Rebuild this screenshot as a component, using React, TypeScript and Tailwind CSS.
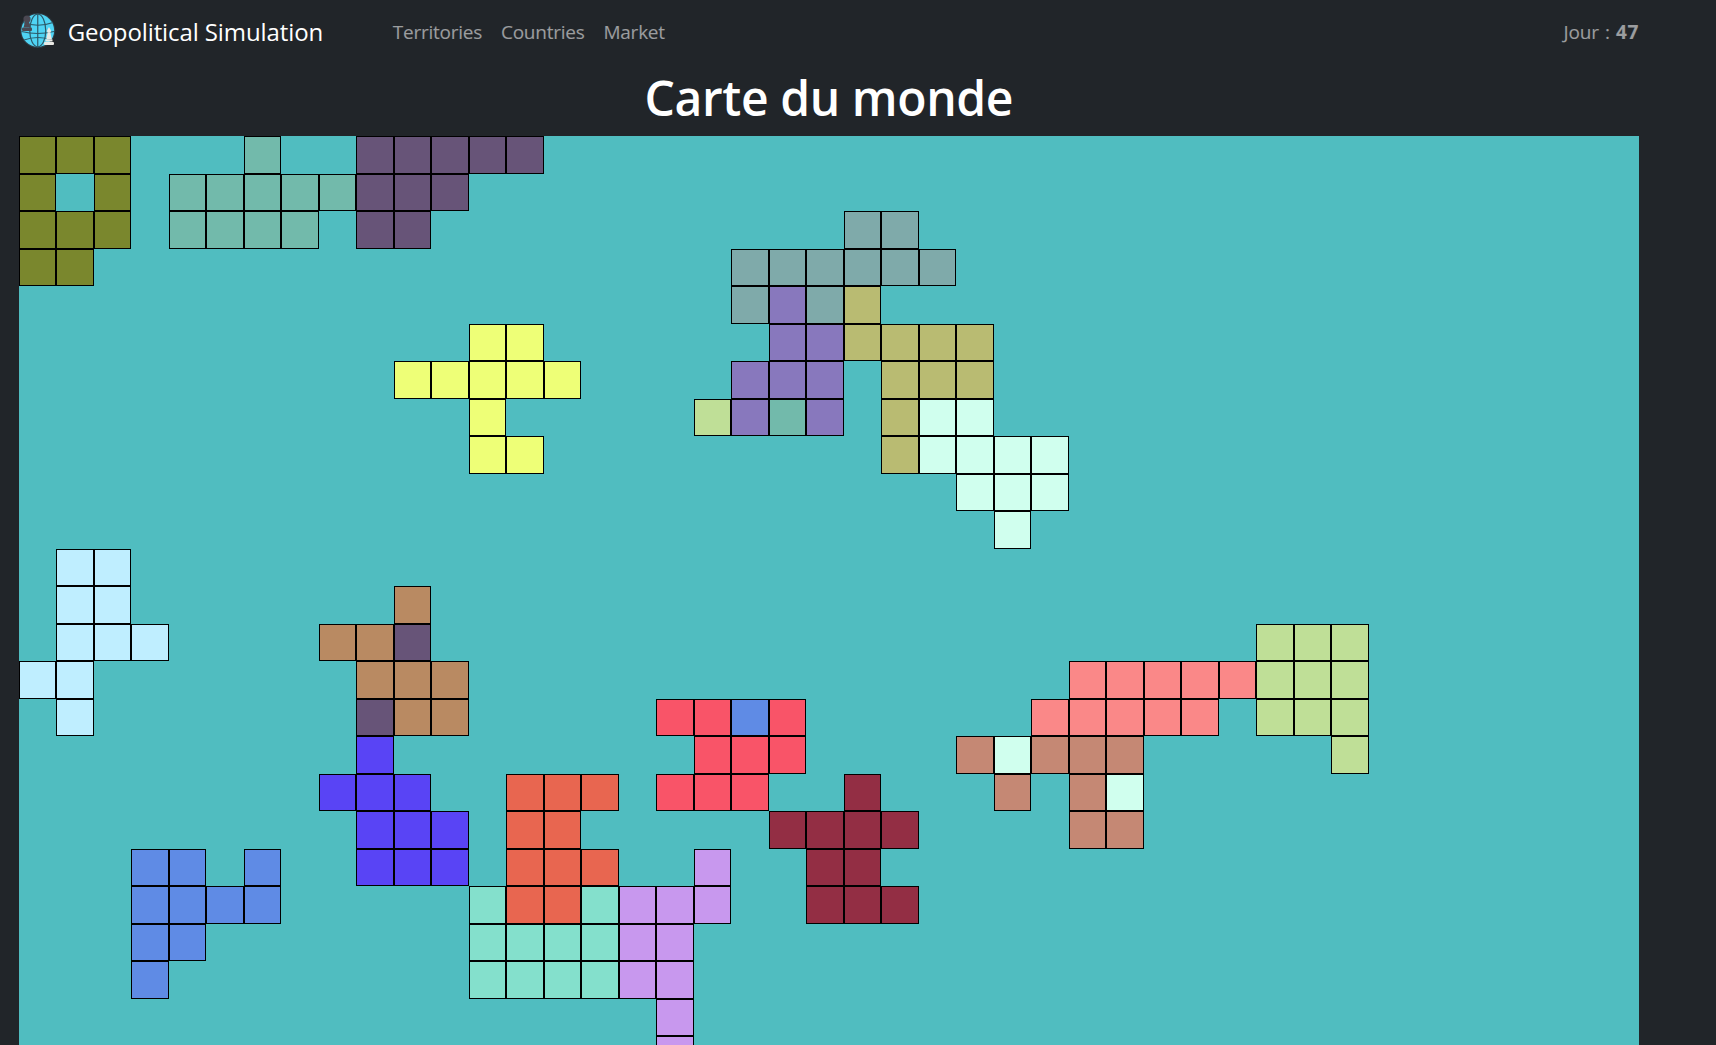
import React from "react";

const ROWS = [
  "AAA...B..CCCCC",
  "A.A.BBBBBCCC",
  "AAA.BBBB.CC...........DD",
  "AA.................DDDDDD",
  "...................DEDF",
  "............HH......EEFFFF",
  "..........HHHHH....EEE.FFF",
  "............H.....SEBE.FGG",
  "............HH.........FGGGG",
  ".........................GGG",
  "..........................G",
  ".II",
  ".II.......J",
  ".III....JJC......................SSS",
  "II.......JJJ................RRRRRSSS",
  ".I.......CJJ.....MMLM......RRRRR.SSS",
  ".........K........MMM....TGTTT.....S",
  "........KKK..OOO.MMM..N...T.TG",
  ".........KKK.OO.....NNNN....TT",
  "...LL.L..KKK.OOO..Q..NN",
  "...LLLL.....POOPQQQ..NNN",
  "...LL.......PPPPQQ",
  "...L........PPPPQQ",
  ".................Q",
  ".................Q",
];

const TERRITORY_COLORS: Record<string, string> = {
  A: "bg-[#7a872d]",
  B: "bg-[#72baab]",
  C: "bg-[#675478]",
  D: "bg-[#7faaaa]",
  E: "bg-[#8878bd]",
  F: "bg-[#b9bb72]",
  G: "bg-[#d0ffee]",
  H: "bg-[#eeff77]",
  I: "bg-[#bfeeff]",
  J: "bg-[#b98a62]",
  K: "bg-[#5944f5]",
  L: "bg-[#5f8be5]",
  M: "bg-[#f95468]",
  N: "bg-[#932e44]",
  O: "bg-[#e86650]",
  P: "bg-[#84e0cc]",
  Q: "bg-[#c898ee]",
  R: "bg-[#fa8888]",
  S: "bg-[#bfdf97]",
  T: "bg-[#c58874]",
};

const Logo = () => (
  <svg viewBox="0 0 38 38" className="w-[38px] h-[38px] shrink-0">
    <circle cx="18.75" cy="17.5" r="17.5" fill="#2e3a42" />
    <circle cx="18.75" cy="17.5" r="16.4" fill="#4fd4f4" />
    <g fill="none" stroke="#2c5968" strokeWidth="1.2">
      <ellipse cx="18.75" cy="17.5" rx="8" ry="16.4" />
      <path d="M18.75 1v33" />
      <path d="M4 9.5q15 5.5 30 0" />
      <path d="M2.5 18.5q16 4 32.5 0" />
      <path d="M5 27q14-5 28 0" />
    </g>
    <g fill="#4b4852">
      <circle cx="8" cy="6" r="3.6" />
      <path d="M6 8.5h4l1.5 6h-7z" />
      <rect x="3" y="14.5" width="10" height="3.5" rx="1" />
    </g>
    <g fill="#e9e9e4">
      <path d="M30 14l2.2 4-1 1.8h-2.4l-1-1.8z" />
      <path d="M28.6 19.5h2.8l1.4 7h-5.6z" />
      <rect x="26.5" y="26.5" width="7" height="2" />
      <rect x="25" y="29" width="10" height="3" rx="1" />
    </g>
  </svg>
);

export default function App() {
  return (
    <div className="h-screen overflow-hidden bg-[#212529] font-['Open_Sans',sans-serif]">
      <div className="w-[1620px] ml-[18.75px]">
        <nav className="h-[64px] flex items-center">
          <div className="w-[374px] flex items-center gap-[11px] text-white text-[24px]">
            <Logo />
            <span className="tracking-[-0.1px]">Geopolitical Simulation</span>
          </div>
          <ul className="flex items-center gap-[19px] text-[19px] tracking-[-0.25px] text-white/55">
            <li>Territories</li>
            <li>Countries</li>
            <li>Market</li>
          </ul>
          <div className="ml-auto text-[19px] tracking-[-0.2px] [word-spacing:1.5px] text-white/55">
            Jour : <b className="tracking-[0.5px]">47</b>
          </div>
        </nav>

        <h1 className="h-[72px] leading-[68px] text-center text-white text-[48px] font-semibold tracking-[-0.4px]">
          Carte du monde
        </h1>

        <div className="bg-[#50bdc0] h-[1000px]">
          {ROWS.map((row, r) => (
            <div key={r} className="flex h-[37.5px]">
              {row.split("").map((c, i) =>
                c === "." ? (
                  <div key={i} className="w-[37.5px] h-[37.5px] shrink-0" />
                ) : (
                  <div
                    key={i}
                    className={`w-[37.5px] h-[37.5px] shrink-0 border border-black ${TERRITORY_COLORS[c]}`}
                  />
                )
              )}
            </div>
          ))}
        </div>
      </div>
    </div>
  );
}
